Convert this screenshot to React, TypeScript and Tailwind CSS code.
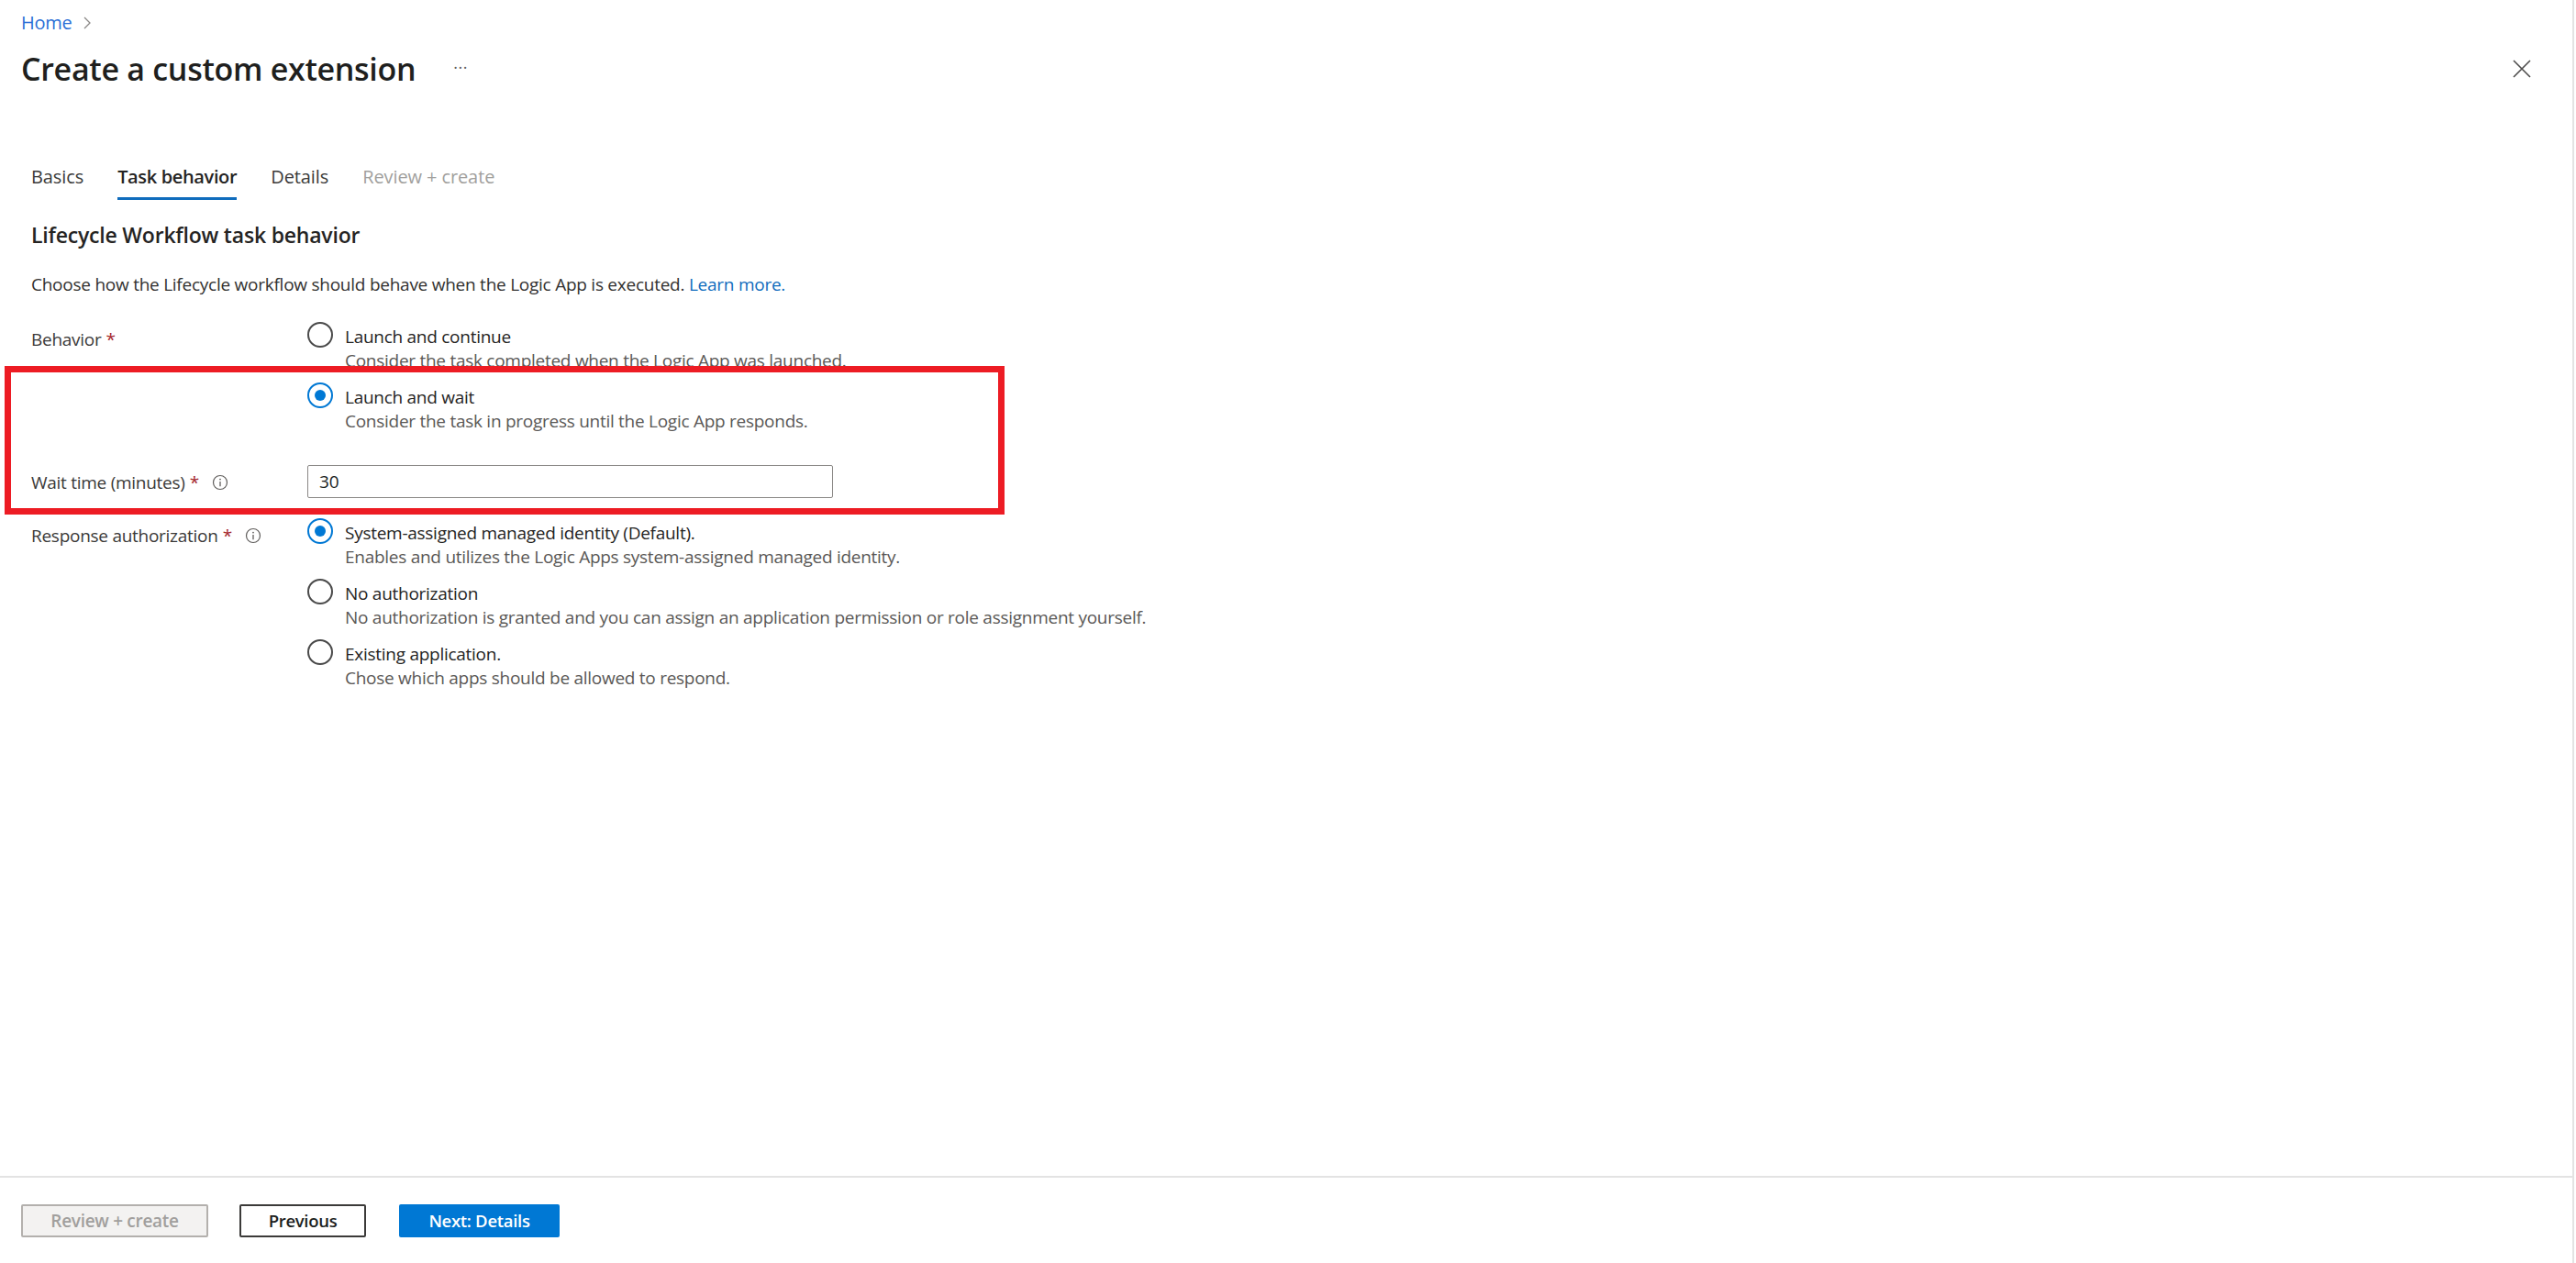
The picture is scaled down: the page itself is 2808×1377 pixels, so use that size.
import React from "react";

const font = { fontFamily: '"Open Sans", "Noto Sans", "Liberation Sans", sans-serif' };

function Radio({ checked }: { checked?: boolean }) {
  return (
    <span
      className={
        "flex h-[28px] w-[28px] shrink-0 items-center justify-center rounded-full border-2 bg-white " +
        (checked ? "border-[#0078d4]" : "border-[#4a4a4a]")
      }
    >
      {checked && <span className="h-[12px] w-[12px] rounded-full bg-[#0078d4]" />}
    </span>
  );
}

function Option({ label, desc, checked }: { label: string; desc: string; checked?: boolean }) {
  return (
    <div className="flex h-[66px] gap-[13px]">
      <div className="-mt-[1px]">
        <Radio checked={checked} />
      </div>
      <div className="flex flex-col pt-[2px]">
        <span className="h-[26px] text-[19px] leading-[26px] tracking-[-0.27px] text-[#252423]">{label}</span>
        <span className="h-[26px] text-[19px] leading-[26px] tracking-[-0.27px] text-[#5a5856]">{desc}</span>
      </div>
    </div>
  );
}

function Info() {
  return (
    <svg width="18" height="18" viewBox="0 0 18 18" fill="none" className="shrink-0">
      <circle cx="9" cy="9" r="7.5" stroke="#605e5c" strokeWidth="1.2" />
      <circle cx="9" cy="5.6" r="0.9" fill="#605e5c" />
      <path d="M9 8v5.2" stroke="#605e5c" strokeWidth="1.3" />
    </svg>
  );
}

function Label({ text, info }: { text: string; info?: boolean }) {
  return (
    <div className="flex items-center text-[19px] leading-[26px] tracking-[-0.27px] text-[#3b3a39]">
      <span>{text}</span>
      <span className="ml-[5px] text-[#a4262c]">*</span>
      {info && (
        <span className="ml-[14px]">
          <Info />
        </span>
      )}
    </div>
  );
}

export default function App() {
  return (
    <div style={font} className="relative flex h-[1377px] w-full flex-col bg-white pr-[2px]">
      <div className="flex min-h-0 flex-1 flex-col border-r-2 border-[#e3e3e3]">
        <header className="pl-[23px] pr-[44px] pt-[12px]">
          <div className="flex h-[26px] items-center gap-[12px]">
            <span className="text-[20px] leading-[26px] tracking-[-0.3px] text-[#2b6fd6]">Home</span>
            <svg width="10" height="16" viewBox="0 0 10 16" fill="none">
              <path d="M2 2l6 6-6 6" stroke="#8a8886" strokeWidth="1.3" />
            </svg>
          </div>
          <div className="mt-[13px] flex h-[48px] items-center">
            <h1 className="text-[34px] font-semibold leading-[48px] tracking-[-0.3px] text-[#201f1e]">
              Create a custom extension
            </h1>
            <span className="ml-[41px] -mt-[4px] text-[18px] leading-none tracking-[0.5px] text-[#605e5c]">···</span>
            <svg width="22" height="22" viewBox="0 0 22 22" fill="none" className="ml-auto">
              <path d="M2 2l18 18M20 2L2 20" stroke="#4d4c4b" strokeWidth="1.6" />
            </svg>
          </div>
        </header>

        <main className="min-h-0 flex-1 pl-[34px]">
          <nav className="mt-[76px] flex h-[43px] gap-[37px] text-[20px] tracking-[-0.1px]">
            <span className="pt-[5px] leading-[26px] text-[#3b3a39]">Basics</span>
            <span className="border-b-[3px] border-[#0f6cbd] pt-[5px] font-semibold leading-[26px] tracking-[-0.35px] text-[#252423]">
              Task behavior
            </span>
            <span className="pt-[5px] leading-[26px] text-[#3b3a39]">Details</span>
            <span className="pt-[5px] leading-[26px] text-[#a19f9d]">Review + create</span>
          </nav>

          <h2 className="mt-[23px] text-[23px] font-semibold leading-[30px] tracking-[-0.2px] text-[#252423]">
            Lifecycle Workflow task behavior
          </h2>
          <p className="mt-[26px] text-[19px] leading-[26px] tracking-[-0.25px] text-[#323130]">
            Choose how the Lifecycle workflow should behave when the Logic App is executed.{" "}
            <span className="text-[#0f6cbd]">Learn more.</span>
          </p>

          <div className="mt-[29px] grid grid-cols-[301px_1fr]">
            <div className="pt-[5px]">
              <Label text="Behavior" />
            </div>
            <div className="h-[132px]">
              <Option label="Launch and continue" desc="Consider the task completed when the Logic App was launched." />
              <Option checked label="Launch and wait" desc="Consider the task in progress until the Logic App responds." />
            </div>

            <div className="mt-[23px] flex h-[36px] items-center pt-[2px]">
              <Label text="Wait time (minutes)" info />
            </div>
            <div className="mt-[23px] w-[573px]">
              <div className="flex h-[36px] items-center rounded-[2px] border border-[#8a8886] px-[12px] text-[19px] text-[#201f1e]">
                30
              </div>
            </div>

            <div className="mt-[23px] pt-[5px]">
              <Label text="Response authorization" info />
            </div>
            <div className="mt-[23px]">
              <Option checked label="System-assigned managed identity (Default)." desc="Enables and utilizes the Logic Apps system-assigned managed identity." />
              <Option label="No authorization" desc="No authorization is granted and you can assign an application permission or role assignment yourself." />
              <Option label="Existing application." desc="Chose which apps should be allowed to respond." />
            </div>
          </div>
        </main>

        <footer className="flex h-[95px] shrink-0 items-start border-t-2 border-[#e3e3e3] pl-[23px] pt-[29px] text-[18.5px] tracking-[-0.3px]">
          <button className="h-[36px] w-[204px] rounded-[2px] border-2 border-[#b3b0ad] bg-[#f3f2f1] text-[19px] font-semibold leading-[30px] text-[#a19f9d]">
            Review + create
          </button>
          <button className="ml-[34px] h-[36px] w-[138px] rounded-[2px] border-2 border-[#3b3a39] bg-white font-semibold leading-[30px] text-[#201f1e]">
            Previous
          </button>
          <button className="ml-[36px] h-[36px] w-[175px] rounded-[2px] bg-[#0078d4] font-semibold leading-[36px] text-white">
            Next: Details
          </button>
        </footer>
      </div>

      <div className="pointer-events-none absolute left-[5px] top-[399px] h-[162px] w-[1090px] border-[7px] border-[#ed1c24]" />
    </div>
  );
}
